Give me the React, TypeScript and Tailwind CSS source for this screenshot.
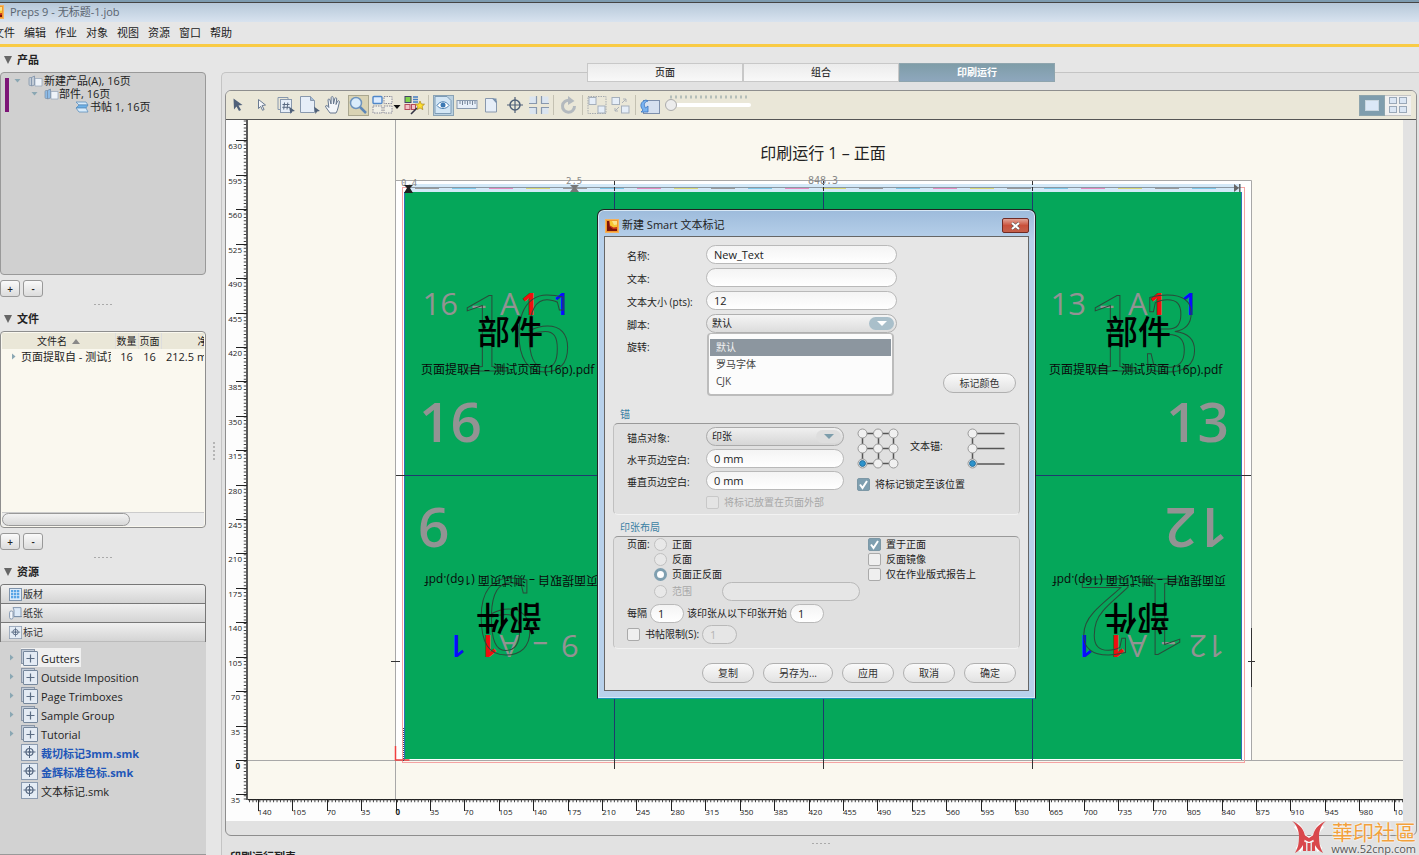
import React from "react";

const FONT = "font-['Open_Sans','Noto_Sans_CJK_SC',sans-serif]";

/* ---------- small icons ---------- */

function AppIcon({ className }: { className: string }) {
  return (
    <svg className={className} viewBox="0 0 14 14" aria-hidden="true">
      <rect x="0.5" y="0.5" width="13" height="13" fill="#f0992e" stroke="#f6b25c" />
      <rect x="2" y="2" width="10" height="10" fill="#c8341b" />
      <path d="M4.500 2H12v6L8.500 8.500 5 6.500z" fill="#f7c531" />
      <path d="M7 2h5v3.500L9 6z" fill="#fbe28a" />
      <path d="M2 2h2l.5 5.500L8 10h4v2H2z" fill="#7a120b" />
    </svg>
  );
}

function Books({ blue }: { blue?: boolean }) {
  const f = blue ? "#8dbbe6" : "#c3ccd6";
  return (
    <svg className="h-3 w-[15px] shrink-0" viewBox="0 0 15 12" aria-hidden="true">
      <rect x="1" y="2.500" width="3" height="8" rx="1" fill={f} stroke="#7c91a8" strokeWidth=".7" />
      <path d="M3.500 2.500l3-1.500v9l-3 1z" fill={f} stroke="#7288a3" strokeWidth=".7" />
      <path d="M7 3.500h7v7.500h-7z" fill="#eef3f9" stroke="#93a4b8" strokeWidth=".7" />
    </svg>
  );
}

function Fold() {
  return (
    <svg className="h-3 w-[14px] shrink-0" viewBox="0 0 14 12" aria-hidden="true">
      <path d="M1 1h10l2 3H4z" fill="#d8ebfa" stroke="#5d8fbd" strokeWidth=".8" />
      <path d="M4 4h9l-2 3H1z" fill="#6db2ea" stroke="#5d8fbd" strokeWidth=".8" />
      <path d="M1 7h10l2 4H4z" fill="#d8ebfa" stroke="#5d8fbd" strokeWidth=".8" />
    </svg>
  );
}

function TargetDoc() {
  return (
    <svg className="h-[17px] w-[17px] shrink-0" viewBox="0 0 17 17" aria-hidden="true">
      <rect x=".5" y=".5" width="16" height="16" fill="#e4ecf5" stroke="#8b9bb0" />
      <circle cx="8.500" cy="8" r="3.500" fill="none" stroke="#53657f" strokeWidth="1.200" />
      <path d="M8.500 2v12M2.500 8h12" stroke="#53657f" strokeWidth="1" />
      <circle cx="8.500" cy="8" r="1.200" fill="#53657f" />
    </svg>
  );
}

function GroupDoc() {
  return (
    <svg className="h-[17px] w-[17px] shrink-0" viewBox="0 0 17 17" aria-hidden="true">
      <rect x=".5" y=".5" width="13" height="14" fill="#c3ccd8" stroke="#8b97a8" />
      <rect x="2.500" y="2.500" width="14" height="14" rx=".5" fill="#e4ebf4" stroke="#76879c" />
      <path d="M9.500 5.500v8M5.500 9.500h8" stroke="#5c6d84" strokeWidth="1.200" />
    </svg>
  );
}

function PlateIcon() {
  return (
    <svg className="h-[13px] w-[13px] shrink-0" viewBox="0 0 13 13" aria-hidden="true">
      <rect x=".5" y=".5" width="12" height="12" fill="#dcebfa" stroke="#7f93ab" />
      {[2, 5, 8].map((x) => [2, 5, 8].map((y) => <rect key={x + "-" + y} x={x} y={y} width="2.300" height="2.300" fill="#5aa5e6" />))}
    </svg>
  );
}

function PaperIcon() {
  return (
    <svg className="h-[13px] w-[13px] shrink-0" viewBox="0 0 13 13" aria-hidden="true">
      <path d="M4 .6h8v8l1 1H5V3z" fill="#dce9f7" stroke="#7b90aa" strokeWidth=".9" />
      <rect x=".6" y="4" width="3.400" height="8" rx="1.500" fill="#f4f7fb" stroke="#7b90aa" strokeWidth=".9" />
      <path d="M5 9.600h7" stroke="#7b90aa" />
    </svg>
  );
}

function Tri({ dir }: { dir: "down" | "right" }) {
  return (
    <svg className="h-[7px] w-[7px] shrink-0" viewBox="0 0 7 7" aria-hidden="true">
      <path d={dir === "down" ? "M0.500 2h6L3.500 5.500z" : "M2 .5v6L5.500 3.500z"} fill="#8aa7b3" />
    </svg>
  );
}

/* ---------- sidebar ---------- */

function SectionHead({ children }: { children: string }) {
  return (
    <h2 className="flex h-6 shrink-0 items-center gap-[5px] pl-1 text-[11px] font-bold text-[#222]">
      <svg className="h-2 w-2" viewBox="0 0 8 8" aria-hidden="true">
        <path d="M0 0h8L4 8z" fill="#666" />
      </svg>
      {children}
    </h2>
  );
}

function PlusMinus() {
  return (
    <div className="flex shrink-0 gap-[3px] pt-[5px]">
      {["+", "-"].map((s) => (
        <button key={s} type="button" className="h-[17px] w-5 rounded-[3px] border border-[#999] bg-gradient-to-b from-[#fafafa] to-[#dcdcdc] text-[10px] leading-4 font-semibold text-[#222]">
          {s}
        </button>
      ))}
    </div>
  );
}

function DotsH() {
  return (
    <div className="flex h-[15px] shrink-0 items-center justify-center gap-[2px]">
      {[0, 1, 2, 3, 4].map((i) => (
        <i key={i} className="h-px w-[2px] bg-[#aaa]" />
      ))}
    </div>
  );
}

const MARKS = [
  { name: "Gutters", group: true, sel: true },
  { name: "Outside Imposition", group: true },
  { name: "Page Trimboxes", group: true },
  { name: "Sample Group", group: true },
  { name: "Tutorial", group: true },
  { name: "裁切标记3mm.smk", blue: true },
  { name: "金辉标准色标.smk", blue: true },
  { name: "文本标记.smk" },
] as { name: string; group?: boolean; sel?: boolean; blue?: boolean }[];

function Sidebar() {
  return (
    <aside className="flex w-[206px] shrink-0 flex-col text-[11px] text-[#222]">
      <div className="pt-[1px]">
        <SectionHead>产品</SectionHead>
      </div>
      <div className="flex h-[203px] shrink-0 rounded-[4px] border border-[#999] bg-[#d0d0d0] pt-[1px] pl-1">
        <div className="mt-1 h-[34px] w-1 bg-[#7d1477]" />
        <ul className="leading-[13px]">
          <li className="flex items-center gap-[1px] pl-[5px]">
            <Tri dir="down" />
            <span className="w-[5px]" />
            <Books />
            新建产品(A), 16页
          </li>
          <li className="flex items-center pl-[22px]">
            <Tri dir="down" />
            <span className="w-1.5" />
            <Books blue />
            部件, 16页
          </li>
          <li className="flex items-center pl-[66px]">
            <Fold />
            <span className="pl-[1px]">书帖 1, 16页</span>
          </li>
        </ul>
      </div>
      <PlusMinus />
      <DotsH />
      <div className="-mt-[5px]">
        <SectionHead>文件</SectionHead>
      </div>
      <div className="flex h-[197px] shrink-0 flex-col overflow-hidden rounded-[4px] border border-[#8e8e8e] bg-[#faf8ef] p-[1px]">
        <div className="flex-1 overflow-hidden">
          <table className="w-[290px] table-fixed border-collapse leading-[15px]">
            <colgroup>
              <col className="w-[113px]" />
              <col className="w-[23px]" />
              <col className="w-[23px]" />
              <col />
            </colgroup>
            <thead>
              <tr className="h-4 bg-[#eae7d8] text-left text-[10px]">
                <th className="border-r border-[#ddd] pl-[35px] font-normal">
                  文件名
                  <svg className="ml-[5px] inline h-[5px] w-2" viewBox="0 0 8 5" aria-hidden="true">
                    <path d="M0 5h8L4 0z" fill="#888" />
                  </svg>
                </th>
                <th className="border-r border-[#ddd] pl-[1px] font-normal">数量</th>
                <th className="border-r border-[#ddd] pl-[1px] font-normal">页面</th>
                <th className="pl-9 font-normal">净尺寸</th>
              </tr>
            </thead>
            <tbody>
              <tr className="h-[15px] whitespace-nowrap">
                <td className="overflow-hidden">
                  <span className="flex w-[109px] items-center gap-1 overflow-hidden pl-2">
                    <Tri dir="right" />
                    页面提取自 - 测试页面
                  </span>
                </td>
                <td className="text-center">16</td>
                <td className="text-center">16</td>
                <td className="pl-[5px]">212.5 mm</td>
              </tr>
            </tbody>
          </table>
        </div>
        <div className="h-[14px] border-t border-[#ccc] bg-[#ececec]">
          <div className="h-[13px] w-32 rounded-[7px] border border-[#999] bg-gradient-to-b from-[#f3f3f3] to-[#d8d8d8]" />
        </div>
      </div>
      <PlusMinus />
      <DotsH />
      <div className="-mt-[5px]">
        <SectionHead>资源</SectionHead>
      </div>
      <div className="flex shrink-0 flex-col overflow-hidden rounded-t-[4px] border-x border-t border-[#777]">
        {[
          { t: "版材", i: <PlateIcon /> },
          { t: "纸张", i: <PaperIcon /> },
          { t: "标记", i: <TargetDoc /> },
        ].map((r, k) => (
          <button
            key={r.t}
            type="button"
            className={
              "flex items-center pl-2 text-[10px] text-[#333] bg-gradient-to-b from-[#f0f0f0] to-[#d4d4d4] h-[19px] " +
              (k === 2 ? "border-b border-[#bbb] [&_svg]:h-[13px] [&_svg]:w-[13px]" : "border-b border-[#777]")
            }
          >
            {r.i}
            <span className="pl-[1px]">{r.t}</span>
          </button>
        ))}
      </div>
      <ul className="flex-1 border-b border-[#999] bg-[#d2d2d2] pt-[6px] text-[11px]">
        {MARKS.map((m) => (
          <li key={m.name} className="flex h-[19px] items-center pl-2">
            <span className="w-[13px]">{m.group && <Tri dir="right" />}</span>
            <span className={"flex h-[19px] items-center gap-[3px] pr-[1px] " + (m.sel ? "bg-[#f0f0f0]" : "")}>
              {m.group ? <GroupDoc /> : <TargetDoc />}
              <span className={"pt-[3px] leading-4 " + (m.blue ? "font-bold text-[#2156b8]" : "")}>{m.name}</span>
            </span>
          </li>
        ))}
      </ul>
    </aside>
  );
}

/* ---------- toolbar ---------- */

const PAGE = "#e6eef8";
const EDGE = "#8898ad";

function Tool({ label, on, wide, children }: { label: string; on?: "tan" | "blue"; wide?: boolean; children: React.ReactNode }) {
  const bg = on === "tan" ? "bg-[#d9d3b4] border-[#aaa78f]" : on === "blue" ? "bg-[#b9d0e0] border-[#8aa3b5]" : "border-transparent";
  return (
    <button type="button" aria-label={label} className={"flex h-[22px] items-center justify-center " + (wide ? "w-8" : "w-6")}>
      <span className={"flex h-[21px] items-center justify-center border " + bg + (wide ? " w-8" : " w-[21px]")}>
        <svg className={wide ? "h-5 w-[30px] shrink-0" : "h-5 w-[22px] shrink-0"} viewBox={wide ? "0 0 30 20" : "0 0 22 20"} aria-hidden="true">
          {children}
        </svg>
      </span>
    </button>
  );
}

function Sep() {
  return (
    <span className="flex w-[5px] justify-center">
      <i className="h-5 w-px bg-[#c4c1b2]" />
    </span>
  );
}

const cursor = (x: number, y: number) => <path d={`M${x} ${y}l6 4.500-2.800.5-1.700 2.500z`} fill="#4f6078" />;

function Toolbar() {
  return (
    <div className="flex h-[29px] shrink-0 items-center rounded-t-[5px] border-b border-[#555] bg-[#eae7d8]">
      <Tool label="选择">
        <path d="M6.500 3.500l9 6.500-4 .6 2.500 4.400-2 1-2.500-4.500-2.500 3z" fill="#50617a" />
      </Tool>
      <Tool label="直接选择">
        <path d="M7.500 4.500l7 5.500-3.400.5 2 4-1.600.8-1.800-4-2.200 2.300z" fill="#f4f6f9" stroke="#6b7b91" />
      </Tool>
      <Tool label="页码">
        <path d="M3 2.500h10v3M3 2.500v12h3" fill="none" stroke={EDGE} />
        <rect x="5.500" y="4.500" width="11" height="13" fill={PAGE} stroke={EDGE} />
        <path d="M9.500 7.500l-.8 7M12.800 7.500l-.8 7M7.500 9.500h7M7.300 12.300h7" stroke="#5a6b82" />
        {cursor(14, 11.5)}
      </Tool>
      <Tool label="页面">
        <path d="M1.500 1.500h10l4 4v12h-14z" fill={PAGE} stroke={EDGE} />
        <path d="M11.500 1.500v4h4" fill="#a6bdd6" stroke={EDGE} />
        {cursor(15, 11.5)}
      </Tool>
      <Tool label="手形">
        <path d="M7 18c-2-3-4-5-4.500-7 .8-1 2.200-.4 3.300 1.500L5 5c0-1.300 1.700-1.300 2 0l1 4 .2-6.500c.2-1.300 1.900-1.300 2 0L10.500 9l1.300-5.500c.4-1.200 2-.9 1.900.4L13 9.500l1.600-3.300c.7-1 2-.4 1.800.8L15 13c-.5 2-1 3.500-2 5z" fill="#f3f6fa" stroke="#66778e" />
      </Tool>
      <Tool label="缩放" on="tan">
        <circle cx="9" cy="8" r="5.500" fill="#d9ecfb" stroke="#6e94bd" strokeWidth="1.500" />
        <path d="M13 12l6 6" stroke="#5d87b8" strokeWidth="2.500" />
      </Tool>
      <Tool label="排列" wide>
        <rect x="2" y="1.500" width="9" height="7" rx="1" fill="#dcecff" stroke="#4f87c9" strokeWidth="1.400" />
        <rect x="13" y="1.500" width="8" height="7" fill="#f0efe6" stroke="#889" strokeDasharray="1.500 1" />
        <rect x="2" y="11" width="9" height="7" fill="#f0efe6" stroke="#889" strokeDasharray="1.500 1" />
        <rect x="13" y="11" width="8" height="7" fill="#f0efe6" stroke="#889" strokeDasharray="1.500 1" />
        <path d="M22.500 10h7l-3.500 4z" fill="#111" />
      </Tool>
      <Tool label="自动">
        <rect x="2" y="1.500" width="6" height="6" fill="#7fd34a" stroke="#446" />
        <path d="M10 2h5M10 4.500h5M10 7h5" stroke="#457ec2" strokeWidth="1.500" />
        <rect x="2" y="9.500" width="5" height="5" fill="#f3c4c9" stroke="#b5495a" />
        <rect x="8.500" y="9.500" width="4" height="5" fill="#f3c4c9" stroke="#b5495a" />
        <path d="M8 19l6-6" stroke="#334" strokeWidth="1.600" />
        <path d="M17 6l1.300 3 3.200.2-2.400 2.200.8 3.200-2.900-1.700-2.800 1.700.7-3.200-2.400-2.200 3.200-.2z" fill="#ffe02e" stroke="#a8821a" strokeWidth=".7" />
      </Tool>
      <Sep />
      <Tool label="预览" on="blue">
        <path d="M3 1.500h12l4 4v13H3z" fill="#d3e6f5" stroke="#7d9bb5" />
        <path d="M5 10.500c3-5 9-5 12 0-3 4-9 4-12 0z" fill="#fff" stroke="#4e82b3" />
        <circle cx="11" cy="10" r="2.500" fill="#3c79b4" />
      </Tool>
      <Tool label="标尺">
        <rect x="1" y="5.500" width="20" height="8" fill={PAGE} stroke={EDGE} />
        <path d="M4 6v3M6.500 6v4M9 6v3M11.500 6v4M14 6v3M16.500 6v4M19 6v3" stroke="#5a6b82" strokeWidth=".8" />
      </Tool>
      <Tool label="文档">
        <path d="M5.500 3.500h8l3 2.500v11h-11z" fill={PAGE} stroke={EDGE} />
        <path d="M12 3.500h4.500v5z" fill="#7790ad" />
      </Tool>
      <Tool label="套准">
        <circle cx="11" cy="10" r="5" fill="none" stroke="#4f6078" strokeWidth="1.500" />
        <path d="M11 2v16M3 10h16" stroke="#4f6078" strokeWidth="1.200" />
      </Tool>
      <Tool label="裁切">
        <path d="M1.500 1.500h7v7h-7zM13.500 1.500h7v7h-7zM1.500 12h7v7h-7zM13.500 12h7v7h-7z" fill="#dbe5f0" />
        <path d="M8.500 1v7.500H1M13.500 1v7.500H21M8.500 19v-6.500H1M13.500 19v-6.500H21" fill="none" stroke={EDGE} strokeWidth="1.200" />
      </Tool>
      <Sep />
      <Tool label="旋转">
        <path d="M12.500 5.300A6 6 0 1 0 17.500 11" fill="none" stroke="#b3b9be" strokeWidth="3" />
        <path d="M11 1l6.500 5-6.500 4z" fill="#b3b9be" />
      </Tool>
      <Sep />
      <Tool label="编组">
        <rect x="2" y="1.500" width="18" height="17" fill="none" stroke="#a5a9ad" strokeDasharray="1.500 1" />
        <rect x="3" y="2.500" width="7" height="7" fill={PAGE} stroke="#a5afbb" />
        <rect x="12" y="11" width="7" height="7" fill={PAGE} stroke="#a5afbb" />
      </Tool>
      <Tool label="取消编组">
        <rect x="2" y="2.500" width="7.500" height="7" fill={PAGE} stroke="#a5afbb" />
        <rect x="11.500" y="11" width="7.500" height="7" fill={PAGE} stroke="#a5afbb" />
        <path d="M12 8l4-4M13 4h3v3M9 12l-4 4M5 13v3h3" fill="none" stroke="#adb2b8" />
      </Tool>
      <Sep />
      <Tool label="翻转">
        <rect x="4.500" y="5.500" width="16" height="13" fill="#d5e0f0" stroke="#7d8fab" />
        <path d="M7 5C2 6 0 11 4 15l-2 2h7v-6l-2.500 2C4.500 10 5 7 9 6z" fill="#79b2f0" stroke="#3a74bd" strokeWidth=".8" />
      </Tool>
      <label className="mb-1 ml-[3px] flex w-[86px] flex-col">
        <span className="sr-only">缩放级别</span>
        <svg className="h-1 w-[86px]" viewBox="0 0 86 4" aria-hidden="true">
          <path d="M5.500 2h76" stroke="#7f9599" strokeWidth="3" strokeDasharray="1 4" />
        </svg>
        <input
          type="range"
          defaultValue={0}
          className="h-3 w-full appearance-none bg-transparent [&::-webkit-slider-runnable-track]:h-1 [&::-webkit-slider-runnable-track]:rounded [&::-webkit-slider-runnable-track]:bg-white [&::-webkit-slider-thumb]:-mt-1 [&::-webkit-slider-thumb]:h-3 [&::-webkit-slider-thumb]:w-3 [&::-webkit-slider-thumb]:appearance-none [&::-webkit-slider-thumb]:rounded-full [&::-webkit-slider-thumb]:border [&::-webkit-slider-thumb]:border-[#aaa] [&::-webkit-slider-thumb]:bg-[#ececec]"
        />
      </label>
      <div className="mr-[5px] ml-auto flex">
        <button type="button" aria-label="单页视图" className="flex h-[21px] w-[26px] items-center justify-center border border-[#8ea5ad] bg-[#7f9dad]">
          <i className="h-[11px] w-[14px] border border-[#c9d6df] bg-[#dbe8f7]" />
        </button>
        <button type="button" aria-label="多页视图" className="grid h-[21px] w-[26px] grid-cols-[8px_8px] content-center justify-center gap-[2px] border-y border-[#c5c5c5] bg-[#f0f0f0]">
          {[0, 1, 2, 3].map((i) => (
            <i key={i} className="h-[7px] border border-[#9aa8b8] bg-[#dbe6f4]" />
          ))}
        </button>
      </div>
    </div>
  );
}

/* ---------- rulers and sheet ---------- */

const STEP = 34.42;

function VerticalRuler() {
  const marks = Array.from({ length: 20 }, (_, i) => 630 - 35 * i);
  return (
    <svg className="h-full w-[22px] bg-[#fdfdfd]" aria-hidden="true">
      <g transform="translate(-226 -120)">
        <path d="M247 120v680" stroke="#222" strokeWidth="1.500" />
        <path d="M245 120v680" stroke="#444" strokeWidth="2.500" strokeDasharray="1 2.442" strokeDashoffset="-.5" />
        {marks.map((m) => {
          const y = 760 - (m / 35) * STEP;
          return (
            <g key={m}>
              <path d={`M236 ${Math.round(y) + 0.5}h11`} stroke="#222" />
              <text x={Math.abs(m) < 100 ? 240 : 242} y={y + 9} textAnchor="end" fontSize="8" fontWeight={m === 0 ? 700 : 400} fill="#222">
                {Math.abs(m)}
              </text>
            </g>
          );
        })}
      </g>
    </svg>
  );
}

function HorizontalRuler() {
  const marks = Array.from({ length: 34 }, (_, i) => 35 * i - 140);
  return (
    <svg className="h-[22px] w-full bg-[#fdfdfd]" aria-hidden="true">
      <g transform="translate(-248 -799)">
        <path d="M248 799.500h1400" stroke="#222" strokeWidth="1.500" />
        <path d="M248 801h1400" stroke="#444" strokeWidth="2.500" strokeDasharray="1 2.442" strokeDashoffset="-1" />
        {marks.map((m) => {
          const x = 395.5 + (m / 35) * STEP;
          return (
            <g key={m}>
              <path d={`M${Math.round(x) + 0.5} 800v11`} stroke="#222" />
              <text x={x} y="815" fontSize="8" fontWeight={m === 0 ? 700 : 400} fill="#222">
                {Math.abs(m)}
              </text>
            </g>
          );
        })}
      </g>
    </svg>
  );
}

function SheetPage({ n, dx, turned, bigRight }: { n: string; dx: number; turned?: boolean; bigRight?: boolean }) {
  return (
    <g transform={turned ? `translate(${dx} 0) rotate(180 509.500 475)` : `translate(${dx} 0)`} className={FONT}>
      <text x="458" y="315" textAnchor="end" fontSize="31" fill="#939393">{n}</text>
      <text x="471" y="315" fontSize="31" fill="#939393">–</text>
      <text x="500" y="315" fontSize="31" fill="#939393">A</text>
      <text x="521" y="315" fontSize="30" fontWeight="700" fill="#f00f0f">1</text>
      <text x="553" y="315" fontSize="30" fontWeight="600" fill="#0a0aff">1</text>
      <text x="514" y="371" textAnchor="middle" fontSize="114" fill="none" stroke="#2b4a3a" strokeWidth="1" className="font-['Liberation_Serif',serif]">{n}</text>
      <text x="510" y="344" textAnchor="middle" fontSize="33" fontWeight="500" fill="#000">部件</text>
      <text x="421" y="374" fontSize="12" fill="#0a0a0a">页面提取自 – 测试页面 (16p).pdf</text>
      <text x={bigRight ? 601 : 419} y="442" textAnchor={bigRight ? "end" : "start"} fontSize="55" fontWeight="600" fill="#939393">{n}</text>
    </g>
  );
}

function Sheet() {
  const bar = ["#999", "#7cc7e8", "#e58abf", "#d9d977"];
  return (
    <svg className="h-full w-full bg-[#faf8ef]" role="img" aria-label="印刷运行 1 – 正面">
      <g transform="translate(-248 -120)">
        <text x="823" y="159" textAnchor="middle" fontSize="16" fill="#222" className={FONT}>印刷运行 1 – 正面</text>
        <rect x="396" y="181" width="855" height="579" fill="#fff" />
        <path d="M395.500 120v680M395 180.500h856.500V760M248 760.500h1400" fill="none" stroke="#a8a8a8" />
        <rect x="409" y="184" width="832" height="8" fill="#d4e9f8" />
        <rect x="402.500" y="187.500" width="842" height="575" fill="none" stroke="#f5a3a3" />
        <rect x="405" y="192" width="837" height="567" fill="#05a75a" />
        <path d="M404.500 192v568M1241.500 192v568" stroke="#2f6fb5" />
        <path d="M409 187.500h832" stroke="#8c98a2" />
        {Array.from({ length: 22 }, (_, i) => (
          <path key={i} d={`M${415 + i * 37} 188.500h24`} stroke={bar[i % 4]} />
        ))}
        <path d="M614.500 192v568M823.500 192v568M1032.500 192v568M405 475.500h837" stroke="#1f3a6e" />
        <path d="M614.500 181v11M823.500 181v11M1032.500 181v11" stroke="#333" strokeDasharray="4 2" />
        <path d="M614.500 760v9M823.500 760v9M1032.500 760v9M396 475.500h9M1242 475.500h9M391 661.500h9M1248 661.500h7M1251.500 628v59" stroke="#333" />
        <path d="M395.500 746v14h14" fill="none" stroke="#f04040" strokeWidth="1.500" />
        <path d="M403.500 728v34" stroke="#445" strokeDasharray="1 1" />
        <g fontSize="9" fill="#888" className="font-['DejaVu_Sans_Mono',monospace]">
          <text x="401" y="186">0.4</text>
          <text x="566" y="184">2.5</text>
          <text x="808" y="184" fontSize="10">848.3</text>
        </g>
        <path d="M404 185h9l-3 3 3 5h-9l3-5z" fill="#222" />
        <path d="M570 185h9l-3 3 3 4h-9l3-4z" fill="#777" />
        <path d="M1234 184l5 4-5 4zM1239 184h1.500v8h-1.500z" fill="#666" />
        <SheetPage n="16" dx={0} />
        <SheetPage n="13" dx={628} bigRight />
        <SheetPage n="9" dx={0} turned bigRight />
        <SheetPage n="12" dx={628} turned />
      </g>
    </svg>
  );
}

/* ---------- dialog ---------- */

const PILL = "rounded-full border border-[#b9b9b9] bg-gradient-to-b from-[#f4f4f4] to-white text-[11px] text-[#222] outline-none ";

function Check({ id, label, checked, disabled }: { id: string; label: string; checked?: boolean; disabled?: boolean }) {
  return (
    <span className="flex items-center gap-[5px]">
      <span className="relative flex">
        <input
          id={id}
          type="checkbox"
          defaultChecked={checked}
          disabled={disabled}
          className="h-[13px] w-[13px] appearance-none rounded-[2px] border border-[#aaa] bg-[#efefef] checked:border-[#7d98a6] checked:bg-[#7f9fb0] disabled:border-[#c8c8c8] disabled:bg-[#e4e4e4]"
        />
        {checked && (
          <svg className="pointer-events-none absolute inset-0 h-[13px] w-[13px]" viewBox="0 0 13 13" aria-hidden="true">
            <path d="M3 6.500l2.500 3.500L10 3" fill="none" stroke="#fff" strokeWidth="2" />
          </svg>
        )}
      </span>
      <label htmlFor={id} className={disabled ? "text-[#a8a8a8]" : ""}>{label}</label>
    </span>
  );
}

function Radio({ id, label, checked, disabled }: { id: string; label: string; checked?: boolean; disabled?: boolean }) {
  return (
    <span className="flex items-center gap-[5px]">
      <input
        id={id}
        name="side"
        type="radio"
        defaultChecked={checked}
        disabled={disabled}
        className="h-[13px] w-[13px] appearance-none rounded-full border border-[#c0c0c0] bg-[#e8e8e8] checked:border-[3px] checked:border-[#7f9fb0] checked:bg-white"
      />
      <label htmlFor={id} className={disabled ? "text-[#a8a8a8]" : ""}>{label}</label>
    </span>
  );
}

function Node({ x, y, on }: { x: number; y: number; on?: boolean }) {
  return (
    <g>
      <circle cx={x} cy={y} r="4.500" fill="#f0f0f0" stroke="#999" />
      {on && <circle cx={x} cy={y} r="3" fill="#2d93cc" stroke="#1d5f8a" strokeWidth=".8" />}
    </g>
  );
}

function Legend({ children }: { children: string }) {
  return <h3 className="pl-[7px] text-[10px] leading-[13px] text-[#3a7fa3]">{children}</h3>;
}

const BOX = "rounded-[5px] border border-t-[#999] border-x-[#c0c0c0] border-b-[#f2f2f2] bg-[#e0e0e0] ";
const BTN = "h-5 rounded-full border border-[#b0b0b0] bg-gradient-to-b from-[#fafafa] to-[#e2e2e2] text-[10px] text-[#333] ";

function Dialog() {
  return (
    <div
      role="dialog"
      aria-label="新建 Smart 文本标记"
      className="absolute top-[209px] left-[597px] w-[439px] rounded-t-[7px] border border-[#222] border-b-[#1893b5] bg-gradient-to-b from-[#9dbbdb] to-[#b8d1eb] to-[30px] px-[6px] pb-[7px] text-[10px] text-[#222] shadow-[inset_0_0_0_1px_#d8e8f6]"
    >
      <div className="flex h-[26px] items-center pt-[5px] pl-[1px]">
        <AppIcon className="h-[14px] w-[14px]" />
        <h1 className="pl-[3px] text-[11px]">新建 Smart 文本标记</h1>
        <button type="button" aria-label="关闭" className="ml-auto flex h-[15px] w-[27px] items-center justify-center rounded-[2px] border border-[#6f2b25] bg-gradient-to-b from-[#e0a397] via-[#c9503b] to-[#c4604b]">
          <svg className="h-2 w-[9px]" viewBox="0 0 9 8" aria-hidden="true">
            <path d="M1 1l7 6M8 1L1 7" stroke="#555" strokeWidth="3" />
            <path d="M1 1l7 6M8 1L1 7" stroke="#fff" strokeWidth="2" />
          </svg>
        </button>
      </div>
      <form className="h-[455px] border border-[#666] bg-[#e6e6e6] px-[8px] pt-[8px]" onSubmit={(e) => e.preventDefault()}>
        <div className="relative grid grid-cols-[79px_191px] items-center gap-y-1 pl-[14px] [&>label]:pt-1">
          <label htmlFor="name">名称:</label>
          <input id="name" className={PILL + "h-[19px] px-[7px]"} defaultValue="New_Text" />
          <label htmlFor="text">文本:</label>
          <input id="text" className={PILL + "h-[19px] px-[7px]"} />
          <label htmlFor="size">文本大小 (pts):</label>
          <input id="size" className={PILL + "h-[19px] px-[7px]"} defaultValue="12" />
          <label htmlFor="script">脚本:</label>
          <span className="relative flex">
            <select id="script" className="h-[19px] w-full appearance-none rounded-full border border-[#b0b0b0] bg-gradient-to-b from-[#f5f5f5] to-[#dcdcdc] px-[5px] text-[10px] text-[#222]">
              <option>默认</option>
              <option>罗马字体</option>
              <option>CJK</option>
            </select>
            <span className="pointer-events-none absolute top-[3px] right-[3px] flex h-[13px] w-[25px] items-center justify-center rounded-full bg-[#a9bfca]">
              <svg className="h-[5px] w-[10px]" viewBox="0 0 10 5"><path d="M0 0h10L5 5z" fill="#fff" /></svg>
            </span>
          </span>
          <span className="h-[19px] leading-[21px]">旋转:</span>
          <ul role="listbox" aria-label="脚本" className="absolute top-[88px] left-[94px] w-[187px] rounded-[4px] border-2 border-t border-[#bcbcbc] bg-[#fcfcfc] pt-[5px] pb-[4px] text-[10px] leading-[17px] text-[#444]">
            <li role="option" aria-selected="true" className="mx-[1px] bg-[#8c969f] pl-[6px] text-[#f2f2f2]">默认</li>
            <li role="option" aria-selected="false" className="pl-[7px]">罗马字体</li>
            <li role="option" aria-selected="false" className="pl-[7px]">CJK</li>
          </ul>
        </div>
        <div className="flex justify-end pt-[17px] pr-1">
          <button type="button" className={BTN + "w-[73px]"}>标记颜色</button>
        </div>

        <div className="pt-[15px]">
          <Legend>锚</Legend>
        </div>
        <section className={BOX + "mt-[2px] flex h-[92px] pl-[13px]"}>
          <div className="grid grid-cols-[79px_138px] content-start items-center gap-y-[3px] pt-[3px] [&>label]:pt-[3px]">
            <label htmlFor="anchor">锚点对象:</label>
            <span className="relative flex">
              <select id="anchor" className="h-[19px] w-full appearance-none rounded-full border border-[#aaa] bg-gradient-to-b from-[#f0f0f0] to-[#d6d6d6] px-[5px] text-[10px] text-[#222]">
                <option>印张</option>
              </select>
              <span className="pointer-events-none absolute top-[3px] right-[3px] flex h-[13px] w-[25px] items-center justify-center rounded-full bg-[#dedede]">
                <svg className="h-[5px] w-[10px]" viewBox="0 0 10 5"><path d="M0 0h10L5 5z" fill="#7d9dab" /></svg>
              </span>
            </span>
            <label htmlFor="hm">水平页边空白:</label>
            <input id="hm" className={PILL + "h-[19px] px-[7px]"} defaultValue="0 mm" />
            <label htmlFor="vm">垂直页边空白:</label>
            <input id="vm" className={PILL + "h-[19px] px-[7px]"} defaultValue="0 mm" />
            <span className="col-start-2 pt-[2px]">
              <Check id="outside" label="将标记放置在页面外部" disabled />
            </span>
          </div>
          <div className="flex flex-col gap-[7px] pt-[4px] pl-[13px]">
            <div className="flex items-start">
              <svg className="h-[42px] w-[44px]" viewBox="0 0 44 42" role="img" aria-label="锚点位置">
                <path d="M5.500 5.500h31v30h-31zM5.500 20.500h31M21.500 5.500v30" fill="none" stroke="#555" strokeWidth="1.500" />
                {[5.5, 20.5, 35.5].map((y) => [5.5, 21, 36.5].map((x) => <Node key={x + "-" + y} x={x} y={y} on={x === 5.5 && y === 35.5} />))}
              </svg>
              <span className="w-[66px] pt-[11px] pl-[9px]">文本锚:</span>
              <svg className="h-[42px] w-[44px]" viewBox="0 0 44 42" role="img" aria-label="文本锚">
                <path d="M5.500 5.500h32M5.500 20.500h32M5.500 36h32M5.500 5v30" fill="none" stroke="#555" strokeWidth="1.500" />
                {[5.5, 20.5, 35.5].map((y) => <Node key={y} x={5.5} y={y} on={y === 35.5} />)}
              </svg>
            </div>
            <Check id="lock" label="将标记锁定至该位置" checked />
          </div>
        </section>

        <div className="pt-[6px]">
          <Legend>印张布局</Legend>
        </div>
        <section className={BOX + "mt-[2px] h-[113px] px-[13px]"}>
          <div className="flex leading-[15px]">
            <span className="w-[27px]">页面:</span>
            <div className="flex flex-col">
              <Radio id="r1" label="正面" />
              <Radio id="r2" label="反面" />
              <Radio id="r3" label="页面正反面" checked />
            </div>
            <div className="ml-auto flex w-[138px] flex-col">
              <Check id="c1" label="置于正面" checked />
              <Check id="c2" label="反面镜像" />
              <Check id="c3" label="仅在作业版式报告上" />
            </div>
          </div>
          <div className="flex items-center gap-[30px] pl-[27px]">
            <Radio id="r4" label="范围" disabled />
            <input aria-label="范围" disabled className="h-[19px] w-[138px] rounded-full border border-[#b9b9b9] bg-[#e6e6e6]" />
          </div>
          <div className="flex items-center gap-[3px] pt-[3px]">
            <label htmlFor="every">每隔</label>
            <input id="every" className={PILL + "h-[19px] w-[34px] px-[7px]"} defaultValue="1" />
            <label htmlFor="from">该印张从以下印张开始</label>
            <input id="from" className={PILL + "h-[19px] w-[34px] px-[7px]"} defaultValue="1" />
          </div>
          <div className="flex items-center gap-[3px] pt-[2px]">
            <Check id="c4" label="书帖限制(S):" />
            <input aria-label="书帖限制" disabled defaultValue="1" className="h-[19px] w-[35px] rounded-full border border-[#b9b9b9] bg-[#e6e6e6] px-[7px] text-[11px] text-[#b5b5b5]" />
          </div>
        </section>
        <div className="flex justify-end gap-[9px] pt-[14px] pr-1">
          <button type="button" className={BTN + "w-[52px]"}>复制</button>
          <button type="button" className={BTN + "w-[70px]"}>另存为...</button>
          <button type="button" className={BTN + "w-[52px]"}>应用</button>
          <button type="button" className={BTN + "w-[52px]"}>取消</button>
          <button type="submit" className={BTN + "w-[52px]"}>确定</button>
        </div>
      </form>
    </div>
  );
}

function Watermark() {
  return (
    <div className="absolute right-[3px] bottom-0 flex items-center gap-[4px]">
      <svg className="h-[34px] w-[36px]" viewBox="0 0 36 34" aria-hidden="true">
        <g fill="none" stroke="#fff" strokeWidth="6" strokeLinejoin="round">
          <path d="M5 5c8 7 8 18 2 25M31 5c-8 7-8 18-2 25M11 16l7 4 7-4" />
        </g>
        <g fill="#d9484c">
          <path d="M1 1c9 4 12 9 13 15 0 7-3 13-10 17 3-5 4-10 4-16C8 11 6 5 1 1z" />
          <path d="M35 1c-9 4-12 9-13 15 0 7 3 13 10 17-3-5-4-10-4-16 0-6 2-12 7-16z" />
          <path d="M12 14l6 4 6-4v5l-6 3-6-3z" />
          <path d="M12 21l3 1.500V31h-3zM16.500 23h3v8h-3zM24 21l-3 1.500V31h3z" />
        </g>
      </svg>
      <div className="flex flex-col items-end">
        <span className="font-['Noto_Sans_CJK_TC',sans-serif] text-[21px] leading-6 text-[#f2a13c] [text-shadow:0_0_2px_#fff,0_0_2px_#fff]">華印社區</span>
        <a href="#site" className="text-[11px] leading-3 text-[#555] [text-shadow:0_0_2px_#fff]">www.52cnp.com</a>
      </div>
    </div>
  );
}

const TABS = ["页面", "组合", "印刷运行"];

export default function App() {
  return (
    <div className={"relative flex h-screen flex-col overflow-hidden bg-[#e6e6e6] text-[#222] " + FONT}>
      <header className="shrink-0">
        <div className="flex h-[22px] items-center gap-[6px] border-t-2 border-[#7d9bb0] bg-gradient-to-b from-[#b4c6d8] to-[#d8e3ef] text-[11px] text-[#5a6470] shadow-[inset_0_1px_0_#444]">
          <AppIcon className="-ml-[10px] h-[14px] w-[14px]" />
          <span className="pt-[1px]">Preps 9 - 无标题-1.job</span>
        </div>
        <nav className="-ml-[7px] flex h-[22px] items-center gap-[9px] text-[11px]">
          {["文件", "编辑", "作业", "对象", "视图", "资源", "窗口", "帮助"].map((m) => (
            <button key={m} type="button">{m}</button>
          ))}
        </nav>
        <div className="h-[3px] bg-[#f9cb45]" />
      </header>

      <div className="flex min-h-0 flex-1">
        <Sidebar />
        <div className="flex w-[15px] shrink-0 flex-col items-center justify-center gap-[2px]">
          {[0, 1, 2, 3, 4].map((i) => (
            <i key={i} className="h-[2px] w-[2px] bg-[#b5b5b5]" />
          ))}
        </div>
        <main className="flex min-w-0 flex-1 flex-col">
          <div className="h-[25px] shrink-0" />
          <div className="flex min-h-0 flex-1 flex-col rounded-tl-[5px] border-t border-l border-[#c4c4c4] bg-[#e2e2e2] pr-[2px] pl-[3px]">
            <div role="tablist" className="relative -mt-[10px] flex h-[19px] shrink-0 justify-center">
              {TABS.map((t, i) => (
                <button
                  key={t}
                  type="button"
                  role="tab"
                  aria-selected={i === 2}
                  className={
                    "w-[156px] border text-[10px] " +
                    (i === 2
                      ? "border-[#8fa5ae] bg-gradient-to-b from-[#7f9da8] to-[#8ea7bd] font-semibold text-white"
                      : "border-[#c8c8c8] bg-gradient-to-b from-[#ececec] to-[#f8f8f8] font-medium text-[#333]")
                  }
                >
                  {t}
                </button>
              ))}
            </div>
            <section className="mt-2 flex min-h-0 flex-1 flex-col rounded-[6px] border border-[#8e8e8e]">
              <Toolbar />
              <div className="flex min-h-0 flex-1">
                <div className="w-[22px] shrink-0">
                  <VerticalRuler />
                </div>
                <div className="flex min-w-0 flex-1 flex-col">
                  <div className="min-h-0 flex-1">
                    <Sheet />
                  </div>
                  <div className="h-[22px] shrink-0">
                    <HorizontalRuler />
                  </div>
                </div>
                <div className="w-[13px] shrink-0" />
              </div>
              <div className="h-[14px] shrink-0" />
            </section>
            <div className="h-[19px] shrink-0 overflow-hidden">
              <DotsH />
              <h2 className="-mt-[2px] pl-[5px] text-[11px] leading-4 font-bold">印刷运行列表</h2>
            </div>
          </div>
        </main>
      </div>

      <Dialog />
      <Watermark />
    </div>
  );
}
